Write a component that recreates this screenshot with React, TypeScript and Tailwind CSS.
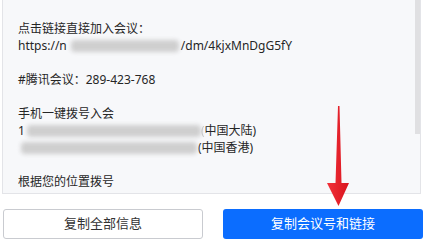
import React from "react";

function Blur({ w, cls = "" }: { w: number; cls?: string }) {
  return (
    <span
      className={"inline-block align-middle h-[12px] bg-[#cfcfcf] blur-[2px] rounded-sm " + cls}
      style={{ width: w }}
    />
  );
}

export default function App() {
  return (
    <div className="relative w-[424px] h-[244px] bg-white overflow-hidden font-['Noto_Sans','Noto_Sans_CJK_SC',sans-serif] text-[12px] text-[#262626]">
      <div className="relative ml-[2px] w-[419px] h-[194px] bg-[#f7f8fa] border-l border-r border-b border-[#e3e4e8] overflow-hidden">
        <div className="pl-[15px] pt-[20px] leading-[17px] whitespace-nowrap">
          <div>点击链接直接加入会议：</div>
          <div className="flex items-center">
            <span>https://n</span>
            <Blur w={108} cls="ml-[4px] mr-[2px]" />
            <span>/dm/4kjxMnDgG5fY</span>
          </div>
          <div className="h-[17px]" />
          <div>#腾讯会议：289-423-768</div>
          <div className="h-[17px]" />
          <div>手机一键拨号入会</div>
          <div className="flex items-center">
            <span>1</span>
            <Blur w={174} cls="ml-[2px]" />
            <span className="opacity-20">(</span>
            <span>中国大陆)</span>
          </div>
          <div className="flex items-center">
            <Blur w={176} cls="ml-[3px] mr-[1px]" />
            <span>(中国香港)</span>
          </div>
          <div className="h-[17px]" />
          <div>根据您的位置拨号</div>
        </div>
        <div className="absolute right-0 top-0 w-[5px] h-[134px] bg-[#e0e0e2]" />
      </div>
      <div className="flex mt-[15px] ml-[3px] gap-[20px]">
        <button className="w-[200px] h-[30px] bg-white border border-[#c9cbd0] rounded-[3px] text-[13px] text-[#333]">
          复制全部信息
        </button>
        <button className="w-[200px] h-[30px] bg-[#0b6dff] rounded-[3px] text-[13px] text-white">
          复制会议号和链接
        </button>
      </div>
      <svg className="absolute left-0 top-0" width="424" height="244" viewBox="0 0 424 244">
        <defs>
          <linearGradient id="ar" x1="0" x2="1" y1="0" y2="0">
            <stop offset="0" stopColor="#f2313a" />
            <stop offset="1" stopColor="#d8131d" />
          </linearGradient>
        </defs>
        <polygon
          points="338,106 339.5,106 341.5,183 349,183 338.5,206 327,183 335.5,183"
          fill="url(#ar)"
        />
      </svg>
    </div>
  );
}
